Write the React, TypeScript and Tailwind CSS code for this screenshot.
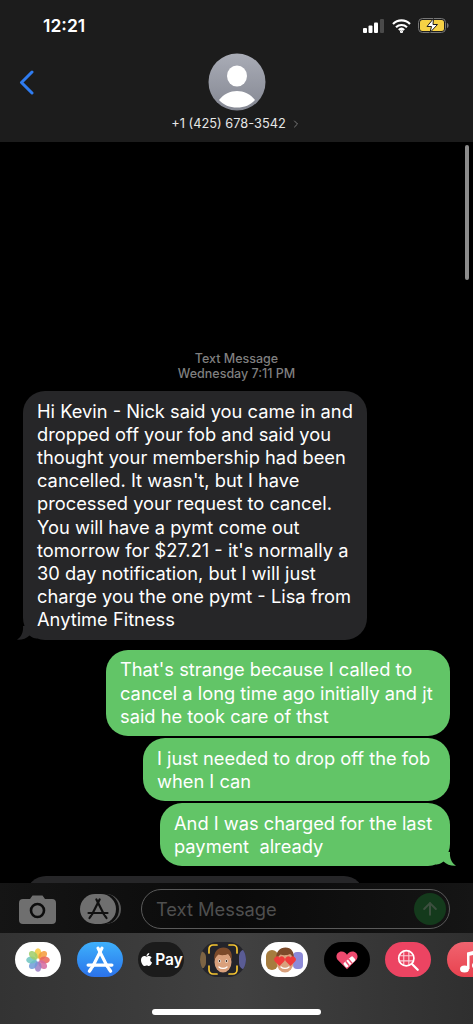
import { FaApple } from 'react-icons/fa';
import { ChevronRight, ArrowUp } from 'lucide-react';

const sans = "font-['Inter','Liberation_Sans',sans-serif]";

const PhotosIcon = () => {
    const colors = ['#f7c83c', '#f49a3a', '#e8635a', '#d56aa0', '#9a7ec4', '#6f9bd8', '#6cc3c0', '#9fce6a'];
    return (
        <svg width="24" height="24" viewBox="-12 -12 24 24">
            {colors.map((c, i) => (
                <ellipse key={c} cx="0" cy="-6.6" rx="3.5" ry="5.2" fill={c} opacity="0.85" transform={`rotate(${i * 45})`} />
            ))}
        </svg>
    );
};

const AppStoreGlyph = ({ color, size, stroke }: { color: string; size: number; stroke: number }) => (
    <svg width={size} height={size} viewBox="0 0 24 24" fill="none" stroke={color} strokeWidth={stroke} strokeLinecap="round">
        <path d="M13.6 2.500 6 17.500" />
        <path d="M10.4 2.500 18 17.500" />
        <path d="M2.500 16h19" />
        <path d="M3.500 21l1.500-2.200M20.500 21 19 18.800" />
    </svg>
);

const Memoji = ({ hearts }: { hearts?: boolean }) => (
    <svg width="20" height="26" viewBox="0 0 20 26">
        <ellipse cx="10" cy="15" rx="8.500" ry="10.500" fill="#d9a07c" />
        <path d="M1.500 13C0 5 5 .5 10.500 .5S20 5 18.500 13c-1-3-2-5-3.500-6-3 1.500-7 1.500-9.500.5-2 1.500-3 3-4 5.500z" fill="#7c4a2a" />
        {hearts ? null : (
            <>
                <circle cx="6.500" cy="14" r="1.500" fill="#fff" />
                <circle cx="13.500" cy="14" r="1.500" fill="#fff" />
                <circle cx="6.500" cy="14" r="0.900" fill="#3a2415" />
                <circle cx="13.500" cy="14" r="0.900" fill="#3a2415" />
            </>
        )}
        <path d="M6 20c2 1.800 6 1.800 8 0" stroke="#fff" strokeWidth="1.300" fill="none" strokeLinecap="round" />
    </svg>
);

const CameraMemoji = () => (
    <div className="relative flex h-[35px] w-[46px] shrink-0 items-center justify-center overflow-hidden rounded-[18px] bg-[#24242a]">
        <div className="absolute left-0 top-[9px] h-[18px] w-[6px] rounded-r-full bg-[#7d6444]" />
        <div className="absolute right-0 top-[7px] h-[21px] w-[7px] rounded-l-full bg-[#5a5c94]" />
        <Memoji />
        <svg className="absolute left-[8px] top-[2px]" width="30" height="31" viewBox="0 0 30 31" fill="none" stroke="#f5c531" strokeWidth="1.700" strokeLinecap="round">
            <path d="M1 9V5a4 4 0 0 1 4-4h4M21 1h4a4 4 0 0 1 4 4v4M29 22v4a4 4 0 0 1-4 4h-4M9 30H5a4 4 0 0 1-4-4v-4" />
        </svg>
    </div>
);

const StickerMemoji = () => (
    <div className="relative flex h-[35px] w-[47px] shrink-0 items-center justify-center overflow-hidden rounded-[18px] bg-white">
        <div className="absolute left-[5px] top-[8px] h-[20px] w-[12px] rounded-full bg-[#a67c3e]" />
        <div className="absolute right-[5px] top-[10px] h-[17px] w-[10px] rounded-[4px] bg-[#8d8ad8]" />
        <div className="relative">
            <Memoji hearts />
            <svg className="absolute left-[-1px] top-[9px]" width="22" height="10" viewBox="0 0 22 10" fill="#ef3b3b">
                <path d="M5.500 10 1 5.500a3 3 0 0 1 4.500-4 3 3 0 0 1 4.500 4zM16.500 10 12 5.500a3 3 0 0 1 4.500-4 3 3 0 0 1 4.500 4z" />
            </svg>
        </div>
    </div>
);

const HeartGlyph = () => (
    <svg width="24" height="20" viewBox="0 0 32 28">
        <path d="M16 27 3.500 14.500C-1 10 1.500 2 8.500 2c3.500 0 6 2 7.500 4.500C17.500 4 20 2 23.500 2c7 0 9.500 8 5 12.500z" fill="#ee4a6e" />
        <g transform="rotate(-40 19 17)">
            <rect x="11" y="13" width="17" height="8" rx="2" fill="#fff" />
            <rect x="15" y="13" width="2" height="8" fill="#ee4a6e" />
            <rect x="20" y="13" width="2" height="8" fill="#ee4a6e" />
        </g>
    </svg>
);

const SearchGlyph = () => (
    <svg width="22" height="22" viewBox="0 0 26 26" fill="none" stroke="#fff">
        <circle cx="11" cy="11" r="9" strokeWidth="2" />
        <path d="M18 18l6.500 6.500" strokeWidth="2.600" strokeLinecap="round" />
        <path d="M3 8h16M3 14h16M8 3v16M14 3v16" strokeWidth="1.300" opacity="0.75" />
    </svg>
);

const MusicGlyph = () => (
    <svg width="24" height="26" viewBox="0 0 24 26" fill="#fff">
        <path d="M9 5.500 22 2.500V18h-2.500V7L11.500 8.800V22H9z" />
        <ellipse cx="6.500" cy="22" rx="4.500" ry="3.500" />
        <ellipse cx="18" cy="18.500" rx="4" ry="3.300" />
    </svg>
);

const Tail = ({ className, fill }: { className: string; fill: string }) => (
    <svg className={className} width="20" height="20" viewBox="0 0 20 20" fill={fill}>
        <path d="M6 6C6.500 12 4.500 17 0 19.700 5 20 9.500 18.500 12.500 15.500 15 17.500 17 18.200 20 18.500V6z" />
    </svg>
);

const pillClass = 'flex h-[35px] w-[46px] shrink-0 items-center justify-center rounded-[18px]';

export default function App() {
    return (
        <div className={`${sans} flex h-[1024px] w-[473px] flex-col overflow-hidden bg-black text-white`}>
            {/* nav bar */}
            <header className="flex h-[142px] shrink-0 flex-col bg-[#1c1c1c]">
                <div className="flex h-[53px] items-start justify-between pl-[43px] pr-[24px] pt-[15px]">
                    <span className="text-[17.500px] font-semibold leading-[22px]">12:21</span>
                    <div className="flex items-center gap-[7px] pt-[3px]">
                        <svg width="22" height="14" viewBox="0 0 22 14" fill="#fff">
                            <rect x="0" y="9" width="4" height="5" rx="1" />
                            <rect x="5.500" y="6.500" width="4" height="7.500" rx="1" />
                            <rect x="11" y="3.500" width="4" height="10.500" rx="1" />
                            <rect x="17" y="0" width="4" height="14" rx="1" fill="#4a4a4a" />
                        </svg>
                        <svg width="19" height="14" viewBox="0 0 19 14" fill="none" stroke="#fff" strokeWidth="2.200">
                            <path d="M1 5a12 12 0 0 1 17 0" />
                            <path d="M4 8.200a8 8 0 0 1 11 0" />
                            <path d="M6.800 11a4 4 0 0 1 5.400 0" />
                            <circle cx="9.500" cy="12.500" r="0.500" fill="#fff" />
                        </svg>
                        <svg width="31" height="15" viewBox="0 0 31 15">
                            <rect x="0.500" y="0.500" width="27" height="14" rx="4" fill="none" stroke="#777" />
                            <rect x="2" y="2" width="24" height="11" rx="2.500" fill="#f6d145" />
                            <path d="M29 5v5c1-.3 1.600-1.300 1.600-2.500S30 5.300 29 5z" fill="#777" />
                            <path d="M15.500 .5 9 8.500h4.500L12 14.500 19.500 6.500H15z" fill="#fff" stroke="#1c1c1c" strokeWidth="1" />
                        </svg>
                    </div>
                </div>
                <div className="relative flex flex-col items-center">
                    <svg className="absolute left-[19px] top-[17px]" width="15" height="25" viewBox="0 0 15 25" fill="none" stroke="#2f7cf0" strokeWidth="3" strokeLinecap="round" strokeLinejoin="round">
                        <path d="M13 2 2.500 12.500 13 23" />
                    </svg>
                    <svg width="58" height="58" viewBox="0 0 58 58">
                        <defs>
                            <linearGradient id="avatarFill" x1="0" y1="0" x2="0" y2="1">
                                <stop offset="0" stopColor="#a9acb6" />
                                <stop offset="1" stopColor="#858893" />
                            </linearGradient>
                        </defs>
                        <circle cx="29" cy="29" r="28.500" fill="url(#avatarFill)" />
                        <ellipse cx="29" cy="23" rx="10" ry="10.500" fill="#fff" />
                        <path d="M11 47C15.500 41 22.500 38 29 38S42.500 41 47 47C42.500 52 36.500 54.500 29 54.500S15.500 52 11 47z" fill="#fff" />
                    </svg>
                    <div className="mt-[5px] flex items-center gap-[4px] text-[12.800px] leading-[16px] text-[#e6e6e6]">
                        <span>+1 (425) 678-3542</span>
                        <ChevronRight size={12} className="text-[#7a7a7a]" />
                    </div>
                </div>
            </header>

            {/* thread */}
            <main className="relative min-h-0 flex-1 overflow-hidden text-[18.300px] leading-[23.200px]">
                <div className="absolute right-[4px] top-[3px] h-[135px] w-[4px] rounded-full bg-[#8c8c8c]" />
                <div className="pt-[209px] text-center text-[12.500px] font-medium leading-[15px] text-[#7f7f7f]">
                    <p>Text Message</p>
                    <p>Wednesday 7:11 PM</p>
                </div>
                <div className="relative ml-[23px] mt-[10px] w-[344px] rounded-[22px] bg-[#262628] py-[8.500px] pl-[14px] pr-[8px]">
                    Hi Kevin - Nick said you came in and dropped off your fob and said you thought your membership had been cancelled. It wasn't, but I have processed your request to cancel. You will have a pymt come out tomorrow for $27.21 - it's normally a 30 day notification, but I will just charge you the one pymt - Lisa from Anytime Fitness
                    <Tail className="absolute bottom-0 left-[-6px]" fill="#262628" />
                </div>
                <div className="mt-[10px] flex flex-col items-end gap-[2px] pr-[23px]">
                    <div className="w-[344px] rounded-[22px] bg-[#62c567] py-[8.300px] pl-[14px] pr-[8px]">
                        That's strange because I called to cancel a long time ago initially and jt said he took care of thst
                    </div>
                    <div className="w-[307px] rounded-[22px] bg-[#62c567] py-[8.300px] pl-[14px] pr-[8px]">
                        I just needed to drop off the fob when I can
                    </div>
                    <div className="relative w-[290px] whitespace-pre-wrap rounded-[22px] bg-[#62c567] py-[8.300px] pl-[14px] pr-[8px]">
                        {'And I was charged for the last payment  already'}
                        <Tail className="absolute bottom-0 right-[-6px] -scale-x-100" fill="#62c567" />
                    </div>
                </div>
                <div className="ml-[26px] mt-[10px] h-[40px] w-[338px] rounded-[22px] bg-[#262628]" />
            </main>

            {/* composer */}
            <div className="flex h-[50px] shrink-0 items-center bg-gradient-to-r from-[#151515] via-[#0a0a0a] to-[#151515] pl-[19px] pr-[23px] pt-[2px]">
                <svg width="37" height="29" viewBox="0 0 37 29">
                    <path d="M4 4h7l2.500-3.500h10L26 4h7a4 4 0 0 1 4 4v17a4 4 0 0 1-4 4H4a4 4 0 0 1-4-4V8a4 4 0 0 1 4-4z" fill="#6f6f6f" />
                    <circle cx="18.500" cy="15.500" r="6.500" fill="none" stroke="#0c0c0c" strokeWidth="2.600" />
                </svg>
                <div className="relative ml-[24px] flex h-[30px] w-[36px] items-center justify-center rounded-full bg-[#6f6f6f]">
                    <div className="absolute right-[-5px] top-0 h-[30px] w-[20px] rounded-r-full border-r-2 border-[#5a5a5a]" />
                    <AppStoreGlyph color="#111" size={24} stroke={2.200} />
                </div>
                <div className="ml-[25px] flex h-[40px] flex-1 items-center justify-between rounded-[20px] border border-[#5a5a5a] pl-[14px] pr-[3px]">
                    <span className="pt-[2px] text-[18.300px] text-[#4f4f4f]">Text Message</span>
                    <div className="flex h-[32px] w-[32px] items-center justify-center rounded-full bg-[#143a1c]">
                        <ArrowUp size={20} strokeWidth={2.400} className="text-[#3d4f3f]" />
                    </div>
                </div>
            </div>

            {/* app drawer */}
            <div className="flex h-[91px] shrink-0 flex-col bg-gradient-to-r from-[#333333] via-[#414141] to-[#2f2f2f]">
                <div className="flex items-center gap-[15.500px] pl-[15px] pt-[9px]">
                    <div className={`${pillClass} bg-white`}><PhotosIcon /></div>
                    <div className={`${pillClass} bg-gradient-to-b from-[#3fb0fb] to-[#2c72ea]`}><AppStoreGlyph color="#fff" size={30} stroke={2.600} /></div>
                    <div className={`${pillClass} gap-[1px] bg-[#1b1b1b]`}>
                        <FaApple size={15} />
                        <span className="text-[15.500px] font-semibold leading-none">Pay</span>
                    </div>
                    <CameraMemoji />
                    <StickerMemoji />
                    <div className={`${pillClass} bg-black`}><HeartGlyph /></div>
                    <div className={`${pillClass} bg-[#ec4462]`}><SearchGlyph /></div>
                    <div className={`${pillClass} justify-start bg-gradient-to-b from-[#f0636f] to-[#e8414f] pl-[11px]`}><MusicGlyph /></div>
                </div>
                <div className="mx-auto mt-[32px] h-[6px] w-[169px] rounded-full bg-white" />
            </div>
        </div>
    );
}
